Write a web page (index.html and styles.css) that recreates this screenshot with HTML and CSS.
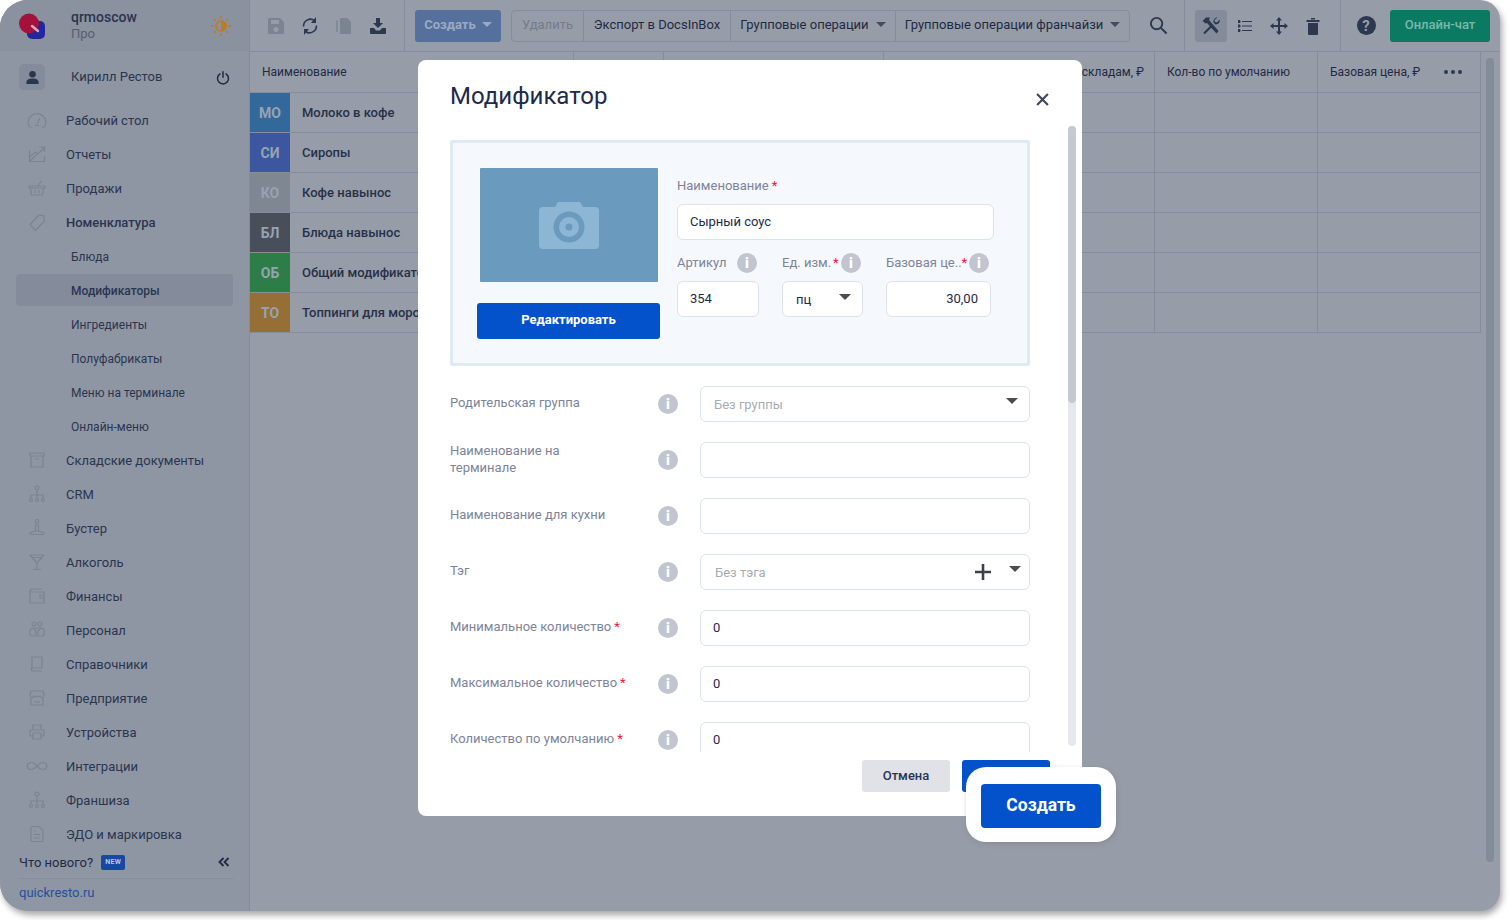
FILE: index.html
```html
<!DOCTYPE html>
<html lang="ru">
<head>
<meta charset="utf-8">
<title>Модификатор</title>
<link rel="stylesheet" href="styles.css">
</head>
<body>
<div class="window">
  <aside class="sidebar">
    <div class="brand">
      <svg class="logo" viewBox="0 0 26 26"><rect x="8" y="8" width="18" height="18" rx="5" fill="#24279c"/><circle cx="10" cy="10.500" r="10" fill="#a4113d"/><path d="M13 13l6 5" stroke="#d9a9b8" stroke-width="2.400" stroke-linecap="round"/></svg>
      <div class="brand-text"><div class="brand-name">qrmoscow</div><div class="brand-plan">Про</div></div>
      <svg class="sun" viewBox="0 0 20 20"><circle cx="10" cy="10" r="5" fill="none" stroke="#bf7a22" stroke-width="1.600"/><path d="M10 5a5 5 0 0 1 0 10z" fill="#bf7a22"/><path d="M10 0v2.400M10 17.600V20M0 10h2.400M17.600 10H20M3 3l1.600 1.600M15.400 15.400L17 17M17 3l-1.600 1.600M4.600 15.400L3 17" stroke="#bf7a22" stroke-width="1.500"/></svg>
    </div>
    <div class="user">
      <div class="avatar"><svg viewBox="0 0 16 16"><circle cx="8" cy="4.500" r="3.500" fill="#2a3550"/><path d="M1.500 15v-2c0-2.500 2.500-4 6.500-4s6.500 1.500 6.500 4v2z" fill="#2a3550"/></svg></div>
      <span class="user-name">Кирилл Рестов</span>
      <svg class="power" viewBox="0 0 14 14"><path d="M4 2.800a5.500 5.500 0 1 0 6 0M7 .8v5.400" fill="none" stroke="#1f2a44" stroke-width="1.500" stroke-linecap="round"/></svg>
    </div>
    <nav class="nav">
      <a class="item"><svg class="ico" viewBox="0 0 20 20"><path d="M2.500 17a8.800 8.800 0 1 1 15 0M2.500 17h3M14.500 17h3M8 15.500h4M10 14l3-6"/></svg>Рабочий стол</a>
      <a class="item"><svg class="ico" viewBox="0 0 20 20"><path d="M2.500 6v11.500h15V12M2.500 13l6-5 2.500 2 6-6M12.500 3h5v5M3 17l7-7"/></svg>Отчеты</a>
      <a class="item"><svg class="ico" viewBox="0 0 20 20"><path d="M2 8h16v2H2zM3.500 10l1 7h11l1-7M8 12v3M12 12v3M11 7.500l4-5"/></svg>Продажи</a>
      <a class="item strong"><svg class="ico" viewBox="0 0 20 20"><path d="M3 12.500l9-9.500 5 1 .5 5-9 9.500zM13.500 6.500h.1"/></svg>Номенклатура</a>
      <a class="sub">Блюда</a>
      <a class="sub active">Модификаторы</a>
      <a class="sub">Ингредиенты</a>
      <a class="sub">Полуфабрикаты</a>
      <a class="sub">Меню на терминале</a>
      <a class="sub">Онлайн-меню</a>
      <a class="item"><svg class="ico" viewBox="0 0 20 20"><path d="M3 3h14v3H3zM4 6v11h12V6M8 9h4"/></svg>Складские документы</a>
      <a class="item"><svg class="ico" viewBox="0 0 20 20"><circle cx="10" cy="4" r="2"/><path d="M10 6v5M4 14v-3h12v3M10 11v3"/><circle cx="4" cy="16" r="1.500"/><circle cx="10" cy="16" r="1.500"/><circle cx="16" cy="16" r="1.500"/></svg>CRM</a>
      <a class="item"><svg class="ico" viewBox="0 0 20 20"><circle cx="10" cy="3.500" r="1.800"/><path d="M8.500 7h3v6h-3zM8.500 13l-5 1.500c-1 .8-.5 2 .5 2h12c1 0 1.500-1.200.5-2l-5-1.500"/></svg>Бустер</a>
      <a class="item"><svg class="ico" viewBox="0 0 20 20"><path d="M3 3h14l-7 8zM10 11v6M6 17.500h8M5 5.500h10"/></svg>Алкоголь</a>
      <a class="item"><svg class="ico" viewBox="0 0 20 20"><path d="M4 3h11M3 6c0-1.500.5-3 2-3M3 6h14v11H3zM17 9h-4v3h4"/></svg>Финансы</a>
      <a class="item"><svg class="ico" viewBox="0 0 20 20"><circle cx="7" cy="4" r="2"/><circle cx="13" cy="4" r="2"/><path d="M5 8h10M3 10a3 3 0 0 1 3-2l3 3v5H5a2 2 0 0 1-2-2zM17 10a3 3 0 0 0-3-2l-3 3v5h4a2 2 0 0 0 2-2z"/></svg>Персонал</a>
      <a class="item"><svg class="ico" viewBox="0 0 20 20"><path d="M5 3h10v11H5zM5 14c-1 0-1 3 0 3h10"/></svg>Справочники</a>
      <a class="item"><svg class="ico" viewBox="0 0 20 20"><path d="M4 3h12l1 4a2 2 0 0 1-4 1 2.500 2.500 0 0 1-3 0 2.500 2.500 0 0 1-3 0 2 2 0 0 1-4-1zM4 10v7h12v-7M8 13v1h4v-1"/></svg>Предприятие</a>
      <a class="item"><svg class="ico" viewBox="0 0 20 20"><path d="M6 7V3h8v4M3 14V8h14v6h-3M6 14H3M6 11h8v6H6z"/></svg>Устройства</a>
      <a class="item"><svg class="ico ico-wide" viewBox="0 0 20 20"><path d="M10 10c-2-2.500-3.500-3.500-5-3.500a3.500 3.500 0 0 0 0 7c1.500 0 3-1 5-3.500s3.500-3.500 5-3.500a3.500 3.500 0 0 1 0 7c-1.500 0-3-1-5-3.500z"/></svg>Интеграции</a>
      <a class="item"><svg class="ico" viewBox="0 0 20 20"><circle cx="10" cy="4" r="2"/><path d="M10 6v5M4 14v-3h12v3M10 11v3"/><circle cx="4" cy="16" r="1.500"/><circle cx="10" cy="16" r="1.500"/><circle cx="16" cy="16" r="1.500"/></svg>Франшиза</a>
      <a class="item"><svg class="ico" viewBox="0 0 20 20"><path d="M4 4a1.500 1.500 0 0 1 1.500-1.500H12L16 6.500V16a1.500 1.500 0 0 1-1.500 1.500h-9A1.500 1.500 0 0 1 4 16zM7 7h2M7 10.500h6M7 14h6"/></svg>ЭДО и маркировка</a>
    </nav>
    <div class="news">
      <span>Что нового?</span><span class="new-badge">NEW</span>
      <svg class="collapse" viewBox="0 0 12 10"><path d="M5.500 1L1.500 5l4 4M10.500 1l-4 4 4 4" fill="none" stroke="#1f2a44" stroke-width="1.800"/></svg>
    </div>
    <a class="site">quickresto.ru</a>
  </aside>

  <main class="main">
    <header class="toolbar">
      <div class="tool"><svg viewBox="0 0 18 18"><path d="M1 2.500A1.500 1.500 0 0 1 2.500 1H13l4 4v10.500a1.500 1.500 0 0 1-1.500 1.500h-13A1.500 1.500 0 0 1 1 15.500zM4 3v4h8V3zM9 10a2.500 2.500 0 1 0 0 5 2.500 2.500 0 0 0 0-5z" fill="#7c8492" fill-rule="evenodd"/></svg></div>
      <div class="tool"><svg viewBox="0 0 18 18"><path d="M13.500 3.500A7 7 0 0 0 2.500 9.500M4.500 14.500A7 7 0 0 0 15.500 8.500" fill="none" stroke="#2c3750" stroke-width="1.600"/><path d="M15 0v6H10zM3 18v-6h5z" fill="#2c3750"/></svg></div>
      <div class="tool"><svg viewBox="0 0 18 18"><path d="M5 1h7l4 4v12H5z" fill="#7c8492"/><path d="M2 3.500V15" stroke="#7c8492" stroke-width="1.500" fill="none"/></svg></div>
      <div class="tool"><svg viewBox="0 0 18 18"><path d="M7 1h4v5h3l-5 5-5-5h3z" fill="#2c3750"/><path d="M1 11h4l2 2.500h4l2-2.500h4v5a1 1 0 0 1-1 1H2a1 1 0 0 1-1-1z" fill="#2c3750"/></svg></div>
      <div class="sep sep-a"></div>
      <div class="create">Создать<span class="caret caret-create"></span></div>
      <div class="group">
        <div class="cell cell-del">Удалить</div>
        <div class="cell cell-exp">Экспорт в DocsInBox</div>
        <div class="cell cell-ops">Групповые операции<span class="caret"></span></div>
        <div class="cell cell-fr">Групповые операции франчайзи<span class="caret"></span></div>
      </div>
      <div class="tool tool-search"><svg viewBox="0 0 20 20"><circle cx="8" cy="8" r="6" fill="none" stroke="#2c3750" stroke-width="2"/><path d="M12.500 12.500L18.500 18.500" stroke="#2c3750" stroke-width="2.200"/></svg></div>
      <div class="sep sep-b"></div>
      <div class="tool-active"><svg viewBox="0 0 20 20"><path d="M1.500 5L5 1.500h4L8 4l9.500 11-2 2.500L6 7 4 7.500 3.500 6.500z" fill="#2c3750"/><path d="M3 17.500L11.500 9" stroke="#2c3750" stroke-width="2.200"/><path d="M16.500 1.500l-3 2.500.5 2 2 .5 2.500-3c.8 2-.5 5-4 5l-2-2c-.5-3 2-5.500 4-5z" fill="#2c3750"/></svg></div>
      <div class="tool tool-list"><svg viewBox="0 0 14 14"><path d="M0 1.500h2v2H0zM0 6h2v2H0zM0 10.500h2v2H0zM4 2.500h10M4 7h10M4 11.500h10" fill="#2c3750" stroke="#2c3750" stroke-width="1"/></svg></div>
      <div class="tool"><svg viewBox="0 0 18 18"><path d="M9 2v14M2 9h14" stroke="#2c3750" stroke-width="2"/><path d="M9 0l3 3.500H6zM9 18l-3-3.500h6zM0 9l3.500-3v6zM18 9l-3.500 3V6z" fill="#2c3750"/></svg></div>
      <div class="tool"><svg viewBox="0 0 16 18"><path d="M1.500 3h13v2h-13zM6 1h4v1.500H6zM3 6h10v11a1 1 0 0 1-1 1H4a1 1 0 0 1-1-1z" fill="#2c3750"/></svg></div>
      <div class="sep sep-c"></div>
      <div class="tool tool-help"><div class="help">?</div></div>
      <div class="chat">Онлайн-чат</div>
    </header>

    <div class="content">
      <div class="table">
        <div class="tr thead">
          <div class="td c1 th-name">Наименование</div>
          <div class="td c2"></div><div class="td c3"></div>
          <div class="td c4 th-right">складам, ₽</div>
          <div class="td c5">Кол-во по умолчанию</div>
          <div class="td c6 th-dots"><span>Базовая цена, ₽</span><span class="dots"><i></i><i></i><i></i></span></div>
        </div>
        <div class="tr"><div class="td c1 name"><span class="badge b-mo">МО</span>Молоко в кофе</div><div class="td c2"></div><div class="td c3"></div><div class="td c4"></div><div class="td c5"></div><div class="td c6"></div></div>
        <div class="tr"><div class="td c1 name"><span class="badge b-si">СИ</span>Сиропы</div><div class="td c2"></div><div class="td c3"></div><div class="td c4"></div><div class="td c5"></div><div class="td c6"></div></div>
        <div class="tr"><div class="td c1 name"><span class="badge b-ko">КО</span>Кофе навынос</div><div class="td c2"></div><div class="td c3"></div><div class="td c4"></div><div class="td c5"></div><div class="td c6"></div></div>
        <div class="tr"><div class="td c1 name"><span class="badge b-bl">БЛ</span>Блюда навынос</div><div class="td c2"></div><div class="td c3"></div><div class="td c4"></div><div class="td c5"></div><div class="td c6"></div></div>
        <div class="tr"><div class="td c1 name"><span class="badge b-ob">ОБ</span>Общий модификатор</div><div class="td c2"></div><div class="td c3"></div><div class="td c4"></div><div class="td c5"></div><div class="td c6"></div></div>
        <div class="tr"><div class="td c1 name"><span class="badge b-to">ТО</span>Топпинги для мороженого</div><div class="td c2"></div><div class="td c3"></div><div class="td c4"></div><div class="td c5"></div><div class="td c6"></div></div>
      </div>
      <div class="page-scroll"></div>
    </div>
  </main>

  <section class="modal">
    <div class="modal-head">
      <h1 class="modal-title">Модификатор</h1>
      <svg class="close" viewBox="0 0 12 12"><path d="M1 1l10 10M11 1L1 11" stroke="#3d4860" stroke-width="2"/></svg>
    </div>
    <div class="modal-body">
      <div class="panel">
        <div class="panel-left">
          <div class="photo"><svg class="camera" viewBox="0 0 60 50"><path d="M4 6h12l3-5h22l3 5h12a4 4 0 0 1 4 4v34a4 4 0 0 1-4 4H4a4 4 0 0 1-4-4V10a4 4 0 0 1 4-4z" fill="#8db6d4" transform="translate(0,1)"/><circle cx="30" cy="27" r="15.500" fill="#6a9abd"/><circle cx="30" cy="27" r="10" fill="#8db6d4"/><circle cx="30" cy="27" r="3.500" fill="#6a9abd"/></svg></div>
          <div class="btn-edit">Редактировать</div>
        </div>
        <div class="panel-right">
          <div class="flabel first">Наименование<span class="req">*</span></div>
          <div class="field field-name">Сырный соус</div>
          <div class="trio">
            <div class="col col-a">
              <div class="col-label"><span class="lbl">Артикул</span><span class="info">i</span></div>
              <div class="field">354</div>
            </div>
            <div class="col col-b">
              <div class="col-label"><span class="lbl">Ед. изм.<span class="req req-tight">*</span></span><span class="info">i</span></div>
              <div class="field field-unit">пц<span class="caret caret-big"></span></div>
            </div>
            <div class="col col-c">
              <div class="col-label"><span class="lbl">Базовая це..<span class="req req-flush">*</span></span><span class="info">i</span></div>
              <div class="field field-price">30,00</div>
            </div>
          </div>
        </div>
      </div>

      <div class="row"><div class="rlabel">Родительская группа</div><span class="info">i</span><div class="field wide ph field-sel"><span>Без группы</span><span class="caret caret-big"></span></div></div>
      <div class="row"><div class="rlabel">Наименование на<br>терминале</div><span class="info">i</span><div class="field wide"></div></div>
      <div class="row"><div class="rlabel">Наименование для кухни</div><span class="info">i</span><div class="field wide"></div></div>
      <div class="row"><div class="rlabel">Тэг</div><span class="info">i</span><div class="field wide ph field-tag"><span class="tag-text">Без тэга</span><svg class="plus" viewBox="0 0 16 16"><path d="M8 0v16M0 8h16" stroke="#3b3f48" stroke-width="2.600"/></svg><span class="caret caret-big"></span></div></div>
      <div class="row"><div class="rlabel">Минимальное количество<span class="req">*</span></div><span class="info">i</span><div class="field wide">0</div></div>
      <div class="row"><div class="rlabel">Максимальное количество<span class="req">*</span></div><span class="info">i</span><div class="field wide">0</div></div>
      <div class="row"><div class="rlabel">Количество по умолчанию<span class="req">*</span></div><span class="info">i</span><div class="field wide">0</div></div>
    </div>
    <div class="modal-scroll"><div class="modal-thumb"></div></div>
    <div class="modal-foot">
      <div class="btn-cancel">Отмена</div>
      <div class="btn-save"></div>
    </div>
  </section>

  <div class="callout"><div class="callout-btn">Создать</div></div>
</div>
</body>
</html>
```

FILE: styles.css
```css
* { box-sizing: border-box; }
html, body { margin: 0; height: 100%; background: #fff; overflow: hidden; }
body { font-family: Roboto, "Liberation Sans", sans-serif; font-size: 13px; color: #2a3550; }

.window {
  position: relative;
  display: flex;
  width: 1500px;
  height: 911px;
  background: #969da8;
  border-radius: 28px 20px 20px 28px;
  box-shadow: 2px 4px 6px rgba(60, 60, 60, .45);
  overflow: hidden;
}

/* sidebar */
.sidebar {
  width: 250px;
  flex: none;
  background: #8f96a3;
  border-right: 1px solid #858c99;
  display: flex;
  flex-direction: column;
}
.brand {
  height: 51px;
  background: #8a919f;
  display: flex;
  align-items: center;
  padding-left: 19px;
}
.logo { width: 26px; height: 26px; flex: none; }
.brand-text { margin: 0 0 2px 26px; flex: 1; }
.brand-name { font-size: 14px; font-weight: 500; line-height: 17px; color: #2a3550; }
.brand-plan { font-size: 13px; line-height: 15px; color: #565e72; }
.sun { width: 20px; height: 20px; margin-right: 18px; }

.user { height: 52px; display: flex; align-items: center; padding-left: 19px; }
.avatar {
  width: 26px; height: 26px; background: #848c9b; border-radius: 5px;
  display: flex; align-items: center; justify-content: center;
}
.avatar svg { width: 15px; height: 15px; }
.user-name { margin: 0 0 2px 26px; flex: 1; }
.power { width: 14px; height: 14px; margin: 2px 19px 0 0; }

.nav { display: flex; flex-direction: column; }
.item { height: 34px; display: flex; align-items: center; padding-left: 27px; }
.ico {
  width: 20px; height: 20px; margin-right: 19px; flex: none;
  fill: none; stroke: #7b8391; stroke-width: 1.200;
}
.ico-wide { transform: scaleX(1.150); }
.strong { font-weight: 500; }
.sub {
  height: 32px; margin: 1px 0 1px 16px; width: 217px; padding: 2px 0 0 55px;
  display: flex; align-items: center; border-radius: 4px; font-size: 12px;
}
.active { background: #848c9b; font-weight: 500; }

.news {
  height: 28px; margin: 0 15px 0 19px; padding: 0 4px 5px 0;
  border-bottom: 1px solid #878e9b;
  display: flex; align-items: center; color: #1f2a44;
}
.new-badge {
  margin-left: 8px; width: 24px; height: 15px; border-radius: 2px;
  background: #154a9e; color: #b9c6da; font-size: 7px; font-weight: 700;
  display: flex; align-items: center; justify-content: center; letter-spacing: .3px;
}
.collapse { width: 12px; height: 10px; margin-left: auto; }
.site { margin: 5px 0 0 19px; color: #244f9f; line-height: 17px; }

/* main */
.main { flex: 1; min-width: 0; display: flex; flex-direction: column; }
.toolbar {
  height: 52px; flex: none; display: flex; align-items: center; padding-left: 9px;
  border-bottom: 1px solid #868d9a;
}
.tool { width: 34px; height: 32px; display: flex; align-items: center; justify-content: center; flex: none; }
.tool svg { width: 18px; height: 18px; }
.tool-list svg { width: 14px; height: 14px; }
.sep { width: 1px; height: 51px; background: #868d9a; flex: none; }
.sep-a { margin-left: 9px; }
.create {
  width: 86px; height: 32px; margin-left: 10px; padding-bottom: 2px; border-radius: 3px; background: #55709c;
  color: #9aaac2; font-weight: 700; display: flex; align-items: center; justify-content: center; flex: none;
}
.caret {
  display: inline-block; width: 0; height: 0; margin-left: 6px;
  border-left: 5px solid transparent; border-right: 5px solid transparent; border-top: 5px solid #434c60;
}
.caret-create { border-top-color: #9aaac2; }
.caret-big { border-left-width: 6.500px; border-right-width: 6.500px; border-top: 6.500px solid #4c4c4c; margin: 0; }
.group {
  display: flex; height: 32px; width: 619px; margin-left: 10px; flex: none;
  border: 1px solid #868d9a; border-radius: 4px;
}
.cell {
  display: flex; align-items: center; justify-content: center; border-right: 1px solid #868d9a;
  color: #1f2a44; white-space: nowrap; padding-bottom: 2px;
}
.cell:last-child { border-right: 0; }
.cell-del { width: 72px; color: #747c8b; }
.cell-exp { width: 147px; }
.cell-ops { width: 165px; }
.cell-ops .caret, .cell-fr .caret { margin-left: 7px; }
.cell-fr { width: 233px; }
.tool-search { margin-left: 11px; }
.tool-search svg { width: 19px; height: 19px; }
.sep-b { margin-left: 9px; }
.tool-active {
  width: 32px; height: 32px; margin: 0 1px 0 10px; background: #848c9b; border-radius: 3px;
  display: flex; align-items: center; justify-content: center; flex: none;
}
.tool-active svg { width: 20px; height: 20px; }
.sep-c { margin-left: 10px; }
.tool-help { margin-left: 8px; }
.help {
  width: 19px; height: 19px; border-radius: 50%; background: #2c3750; color: #969da8;
  font-weight: 700; font-size: 15px; display: flex; align-items: center; justify-content: center;
}
.chat {
  width: 100px; height: 32px; margin-left: 7px; padding-bottom: 2px; border-radius: 3px; background: #0b7a62;
  color: #7db8a6; font-weight: 500; display: flex; align-items: center; justify-content: center; flex: none;
}

.content { flex: 1; display: flex; min-height: 0; }
.table { width: 1231px; flex: none; }
.tr { display: flex; height: 40px; border-bottom: 1px solid #868d9a; }
.thead { height: 41px; font-size: 12px; color: #1f2a44; }
.td {
  height: 100%; border-right: 1px solid #868d9a; display: flex; align-items: center;
  flex: none; white-space: nowrap; overflow: hidden;
}
.c1 { width: 324px; }
.c2 { width: 90px; }
.c3 { width: 220px; }
.c4 { width: 271px; }
.c5 { width: 163px; padding-left: 12px; }
.c6 { width: 163px; padding-left: 12px; }
.th-name { padding-left: 12px; }
.th-right { justify-content: flex-end; padding-right: 10px; }
.th-dots { justify-content: space-between; padding-right: 18px; }
.dots { display: flex; gap: 3px; }
.dots i { width: 4px; height: 4px; border-radius: 50%; background: #2c3750; }
.name { font-weight: 500; color: #263149; }
.badge {
  width: 40px; height: 40px; flex: none; margin-right: 12px; font-size: 14px; font-weight: 700;
  color: #98a3b0; display: flex; align-items: center; justify-content: center;
}
.b-mo { background: #33689b; }
.b-si { background: #3c56a0; }
.b-ko { background: #7f8792; }
.b-bl { background: #484f5b; }
.b-ob { background: #2d7d49; }
.b-to { background: #966f36; }
.page-scroll {
  width: 8px; height: 804px; margin: 6px 0 0 5px; background: #848c99; border-radius: 4px; flex: none;
}

/* modal */
.modal {
  position: absolute; left: 418px; top: 60px; width: 664px; height: 756px;
  background: #fff; border-radius: 8px; display: flex; flex-direction: column;
}
.modal-head { height: 66px; flex: none; display: flex; align-items: flex-start; justify-content: space-between; padding: 20px 33px 0 32px; }
.modal-title { margin: 0; font-size: 24px; font-weight: 400; line-height: 32px; color: #1e2a4a; }
.close { width: 13px; height: 13px; margin-top: 13px; }
.modal-body { height: 626px; flex: none; overflow: hidden; padding: 14px 52px 0 32px; }

.panel {
  height: 226px; border: 3px solid #deeaf4; border-radius: 2px; background: #f5f8fc;
  display: flex; padding: 25px 0 0 24px; margin-bottom: 20px;
}
.panel-left { width: 183px; flex: none; display: flex; flex-direction: column; align-items: center; }
.photo {
  width: 178px; height: 114px; background: #6a9abd; border-radius: 1px; margin-bottom: 21px;
  display: flex; align-items: center; justify-content: center;
}
.camera { width: 60px; height: 50px; }
.btn-edit {
  width: 183px; height: 36px; padding-bottom: 3px; background: #0352cc; color: #fff; border-radius: 3px;
  font-weight: 700; font-size: 13px; display: flex; align-items: center; justify-content: center;
}
.panel-right { width: 317px; margin-left: 17px; flex: none; }
.flabel, .lbl, .rlabel { color: #7d8499; white-space: nowrap; }
.lbl { margin-bottom: 2px; }
.flabel.first { margin-top: 10px; height: 16px; line-height: 16px; margin-bottom: 10px; }
.req { color: #f0123c; margin-left: 3px; }
.req-tight { margin-left: 2px; }
.req-flush { margin-left: 0; }
.field {
  height: 36px; background: #fff; border: 1px solid #dde2e9; border-radius: 6px;
  display: flex; align-items: center; padding: 0 0 2px 12px; color: #1e2a4a;
}
.trio { display: flex; gap: 23px; margin-top: 13px; }
.col-a { width: 82px; }
.col-b { width: 81px; }
.col-c { width: 105px; }
.col-label { display: flex; align-items: center; justify-content: space-between; height: 20px; margin: 0 2px 8px 0; }
.info {
  width: 20px; height: 20px; border-radius: 50%; background: #c1c5cf; color: #fff; flex: none;
  font-size: 14px; font-weight: 900; display: flex; align-items: center; justify-content: center;
}
.field-unit { padding: 0 11px 0 13px; justify-content: space-between; }
.field-unit .caret { margin-bottom: 5px; }
.field-price { justify-content: flex-end; padding-right: 12px; }

.row { display: flex; align-items: center; height: 36px; margin-bottom: 20px; }
.rlabel { width: 208px; flex: none; margin-bottom: 1px; line-height: 16.500px; }
.row .info { margin-right: 22px; }
.wide { width: 330px; flex: none; }
.ph { color: #a7abb3; padding-bottom: 0; }
.field-sel { padding: 0 11px 0 13px; justify-content: space-between; }
.field-sel .caret { margin-bottom: 6px; }
.field-tag { padding: 0 8px 0 14px; }
.tag-text { flex: 1; }
.plus { width: 16px; height: 16px; margin-right: 18px; }
.field-tag .caret { margin-bottom: 6px; }

.modal-scroll {
  position: absolute; left: 650px; top: 66px; width: 8px; height: 620px;
  background: #e6e8ed; border-radius: 4px;
}
.modal-thumb { height: 277px; background: #c5c9d2; border-radius: 4px; }
.modal-foot { display: flex; gap: 12px; padding: 8px 0 0 444px; }
.btn-cancel {
  width: 88px; height: 32px; padding-bottom: 2px; background: #e0e2e8; border-radius: 3px; color: #2a3550;
  font-weight: 500; display: flex; align-items: center; justify-content: center;
}
.btn-save { width: 88px; height: 32px; background: #0352cc; border-radius: 3px; }

.callout {
  position: absolute; left: 966px; top: 767px; width: 150px; height: 75px;
  background: #fff; border-radius: 20px; box-shadow: 1px 2px 5px rgba(120, 110, 110, .35);
  display: flex; align-items: center; justify-content: center; padding-top: 2px;
}
.callout-btn {
  width: 120px; height: 44px; padding-bottom: 2px; background: #0352cc; border-radius: 4px; color: #fff;
  font-size: 17.500px; font-weight: 700; display: flex; align-items: center; justify-content: center;
}
```
